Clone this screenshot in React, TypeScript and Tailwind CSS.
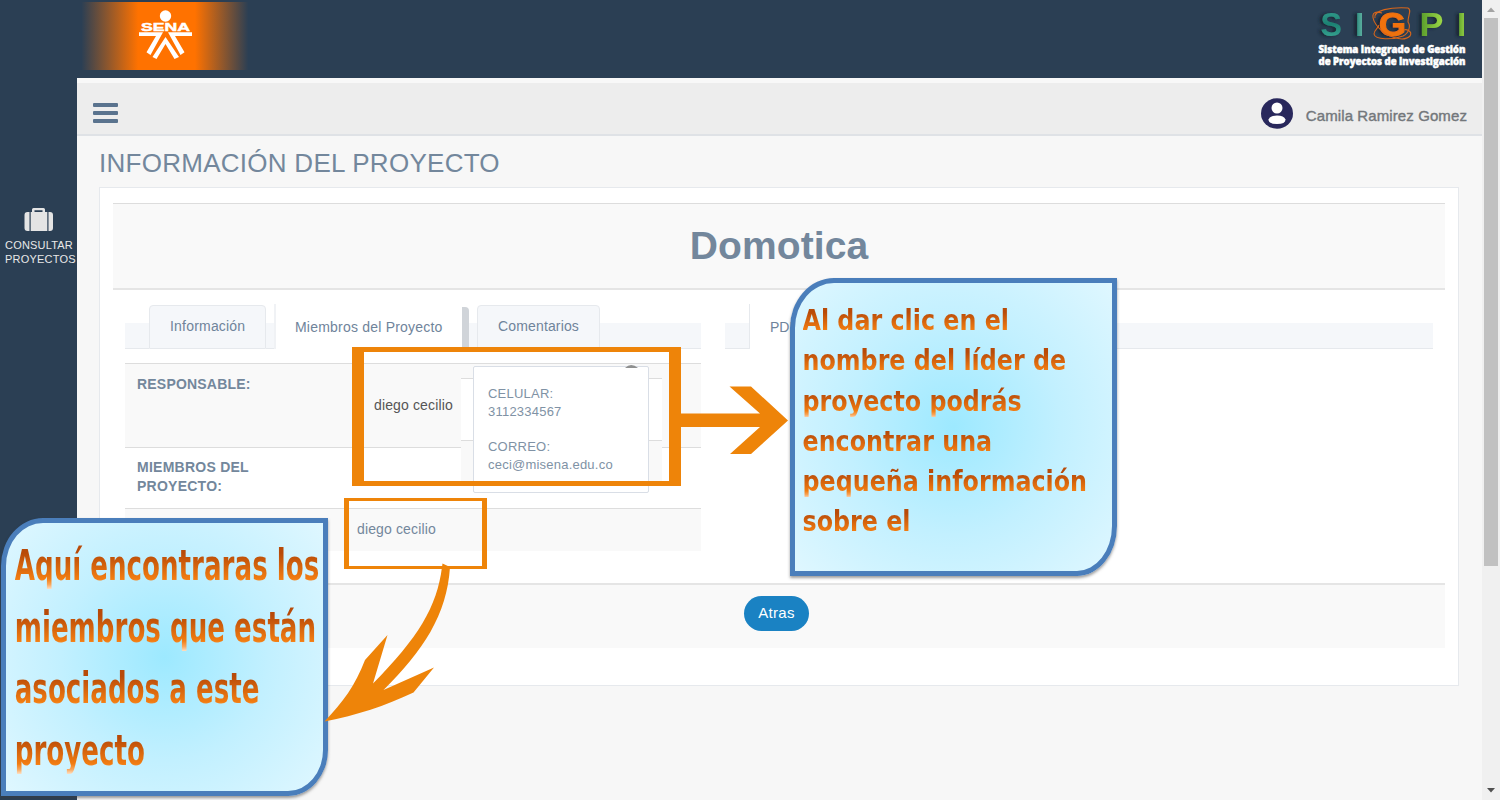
import React from "react";

function SenaLogo() {
  return (
    <svg width="56" height="52" viewBox="0 0 56 52" fill="#fff">
      <circle cx="27.5" cy="7" r="5.7" />
      <text x="3" y="21.5" fontFamily="'Liberation Sans', sans-serif" fontWeight="700" fontSize="10" textLength="49" lengthAdjust="spacingAndGlyphs" stroke="#fff" strokeWidth="0.4">
        SENA
      </text>
      <path d="M1 23.3H25L12.5 46L8.5 43.2L18 27H1Z" />
      <path d="M54 23.3H30L42.5 46L46.5 43.2L37 27H54Z" />
      <path d="M27.5 28L41 48L36.5 50L27.5 35L18.5 50L14.5 48Z" />
    </svg>
  );
}

function SigpiLogo() {
  return (
    <svg width="160" height="70" viewBox="1312 0 160 70">
      <defs>
        <linearGradient id="teal" x1="0" y1="0" x2="0" y2="1">
          <stop offset="0" stopColor="#3aa394" />
          <stop offset="0.5" stopColor="#1d8273" />
          <stop offset="1" stopColor="#3fae9c" />
        </linearGradient>
        <linearGradient id="barTeal" x1="0" y1="0" x2="1" y2="0">
          <stop offset="0" stopColor="#1f7f74" />
          <stop offset="1" stopColor="#6fc0ad" />
        </linearGradient>
        <linearGradient id="green" x1="0" y1="0" x2="1" y2="0">
          <stop offset="0" stopColor="#55992a" />
          <stop offset="1" stopColor="#a0da48" />
        </linearGradient>
        <filter id="soft" x="-30%" y="-30%" width="160%" height="160%">
          <feDropShadow dx="-3" dy="0.5" stdDeviation="1.4" floodColor="#122332" floodOpacity="0.9" />
        </filter>
      </defs>
      <g fontFamily="'Liberation Sans', sans-serif" fontWeight="700" fontSize="33" filter="url(#soft)">
        <text x="1320.500" y="35.500" textLength="21.500" lengthAdjust="spacingAndGlyphs" fill="url(#teal)">S</text>
        <text x="1355" y="35.500" fill="url(#barTeal)">I</text>
        <text x="1379" y="35.500" textLength="27" lengthAdjust="spacingAndGlyphs" fill="#f0720f" stroke="#f0720f" strokeWidth="1">G</text>
        <text x="1419.500" y="35.500" textLength="24" lengthAdjust="spacingAndGlyphs" fill="url(#green)">P</text>
        <text x="1457" y="35.500" fill="url(#green)">I</text>
      </g>
      <g fill="none" stroke="#d9661a" strokeWidth="1.1">
        <path d="M1382 13C1369 9 1372 20 1378 27C1385 36 1403 43 1410 36C1413 31 1406 29 1404 30" />
        <path d="M1375 18C1373 10 1391 7 1408 8C1412 10 1408 15 1408 22C1411 26 1409 33 1403 36C1393 40 1375 40 1374 34C1374 30 1378 29 1379 25" />
      </g>
      <g fontFamily="'Open Sans', 'Noto Sans', sans-serif" fontWeight="800" fontSize="9.600" fill="#fff" stroke="#fff" strokeWidth="0.5">
        <text x="1318.500" y="52.500" textLength="147" lengthAdjust="spacingAndGlyphs">Sistema Integrado de Gestión</text>
        <text x="1318.500" y="64.500" textLength="147" lengthAdjust="spacingAndGlyphs">de Proyectos de Investigación</text>
      </g>
    </svg>
  );
}

function Briefcase() {
  return (
    <svg width="30" height="25" viewBox="0 0 30 25" fill="#e4e4e4">
      <path fillRule="evenodd" d="M8 5V2.500Q8 1 9.500 1H19.500Q21 1 21 2.500V5H23.300V24H6.700V5ZM10.500 5H18.500V3.300H10.500Z" />
      <path d="M5.500 5V24H3.500Q.500 24 .500 21V8Q.500 5 3.500 5ZM24.500 5V24H26Q29 24 29 21V8Q29 5 26 5Z" />
    </svg>
  );
}

function Header() {
  return (
    <header className="flex h-[78px] shrink-0 items-start justify-between bg-[#2b3f54] pl-[78px] pr-[10px]">
      <div className="mt-[2px] flex h-[68px] w-[172px] justify-center bg-[linear-gradient(90deg,#2b3f54_2%,#ff7200_35%,#ff7200_68%,#2b3f54_99%)] pl-1 pt-[7px]">
        <SenaLogo />
      </div>
      <SigpiLogo />
    </header>
  );
}

function Sidebar() {
  return (
    <aside className="flex w-[77px] shrink-0 flex-col bg-[#2b3f54] pl-[5px] pt-[129px] text-[11px] leading-[14px] text-[#e8e8e8]">
      <div className="mb-[6px] ml-[19px] h-[25px]">
        <Briefcase />
      </div>
      <span className="w-max tracking-[0.2px]">CONSULTAR</span>
      <span className="w-max tracking-[0.2px]">PROYECTOS</span>
    </aside>
  );
}

function TopBar() {
  return (
    <div className="flex h-[58px] items-center justify-between border-b-2 border-t-[5px] border-b-[#dfe2e6] border-t-[#f8f8f8] bg-[#ededed] pl-4 pr-[15px]">
      <div className="mt-[9px] flex w-[25px] flex-col gap-1">
        <span className="h-1 rounded-[1px] bg-[#5a738e]" />
        <span className="h-1 rounded-[1px] bg-[#5a738e]" />
        <span className="h-1 rounded-[1px] bg-[#5a738e]" />
      </div>
      <div className="mt-[10px] flex items-center">
        <svg width="32" height="31" viewBox="0 0 32 31">
          <ellipse cx="16" cy="15.500" rx="16" ry="15.200" fill="#29285c" />
          <circle cx="16" cy="10" r="5.500" fill="#fff" />
          <path d="M7.500 21.500Q9 17.500 16 17.500T24.500 21.500Q24.500 26 16 26T7.500 21.500Z" fill="#fff" />
        </svg>
        <span className="ml-[13px] mt-1 text-[15px] leading-5 tracking-[0.1px] text-[#73777b] [-webkit-text-stroke:0.4px_#73777b]">Camila Ramirez Gomez</span>
      </div>
    </div>
  );
}

function Tabs() {
  return (
    <div className="mx-3 mt-[14px] flex h-[45px] text-[14px] text-[#6f849b]">
      <div className="flex w-[151px] items-end border-r-2 border-[#f0f2f5]">
        <span className="h-[26px] w-6 border-b border-[#e6e9ed] bg-[#f5f7fa]" />
        <span className="h-11 w-[117px] rounded-t border border-[#e6e9ed] bg-[#f5f7fa] pl-5 leading-[41px] tracking-[0.2px]">Información</span>
        <span className="h-[26px] flex-1 border-b border-[#e6e9ed] bg-[#f5f7fa]" />
      </div>
      <div className="w-[186px] pl-[19px] leading-[47px] tracking-[0.21px]">Miembros del Proyecto</div>
      <div className="mt-[3px] w-[7px] rounded-tr bg-[#d0d4d9]" />
      <div className="flex w-[232px] items-end">
        <span className="h-[26px] w-2 border-b border-[#e6e9ed] bg-[#f5f7fa]" />
        <span className="h-11 w-[123px] rounded-t border border-[#e6e9ed] bg-[#f5f7fa] pl-5 leading-[41px] tracking-[0.15px]">Comentarios</span>
        <span className="h-[26px] flex-1 border-b border-[#e6e9ed] bg-[#f5f7fa]" />
      </div>
      <div className="ml-6 flex w-[25px] items-end border-r border-[#e6e9ed]">
        <span className="h-[26px] flex-1 border-b border-[#e6e9ed] bg-[#f5f7fa]" />
      </div>
      <div className="w-[100px] pl-5 leading-[47px]">PDF</div>
      <div className="flex flex-1 items-end">
        <span className="h-[26px] flex-1 border-b border-[#e6e9ed] bg-[#f5f7fa]" />
      </div>
    </div>
  );
}

function MembersTable() {
  return (
    <div className="mx-3 mt-[14px] w-[576px] text-[14px] text-[#73879c]">
      <div className="flex h-[84px] border-t border-[#dddddd] bg-[#f9f9f9]">
        <div className="w-[225px] pl-3 pt-[11px] font-bold leading-[18px] tracking-[0.2px]">RESPONSABLE:</div>
        <div className="pl-6 pt-8 leading-[18px] tracking-[0.14px] text-[#555]">diego cecilio</div>
      </div>
      <div className="h-[61px] border-t border-[#dddddd] bg-white pl-3 pt-[10px] font-bold leading-[19px] tracking-[0.25px]">
        MIEMBROS DEL
        <br />
        PROYECTO:
      </div>
      <div className="h-[43px] border-t border-[#dddddd] bg-[#f9f9f9] pl-[232px] leading-[41px] tracking-[0.14px]">diego cecilio</div>
    </div>
  );
}

function ContactPopover() {
  return (
    <>
      <div className="absolute left-[461px] top-[365px] h-[118px] w-[201px] bg-[#f9f9f9]">
        <div className="mt-[13px] h-[63px] border-y border-[#dddddd] bg-white" />
      </div>
      <div className="absolute left-[473px] top-[366px] h-[127px] w-[176px] rounded-[2px] border border-[#d9dee6] bg-white pl-[14px] pt-[18px] text-[13px] leading-[17.7px] tracking-[0.22px] text-[#8092a5]">
        <p>CELULAR:</p>
        <p>3112334567</p>
        <p className="mt-[17.7px]">CORREO:</p>
        <p>ceci@misena.edu.co</p>
      </div>
      <svg className="absolute left-[625px] top-[364px]" width="14" height="4">
        <path d="M0 4Q6 -2 13 4Z" fill="#8f9090" />
      </svg>
    </>
  );
}

function Annotations() {
  return (
    <>
      <div className="absolute left-[352px] top-[347px] h-[139px] w-[329px] border-x-[12.5px] border-y-[5px] border-[#ee8409]" />
      <div className="absolute left-[344px] top-[498px] h-[71px] w-[143px] border-x-[5px] border-y-[3px] border-[#ee8409]" />
      <svg className="absolute left-[680px] top-[386px]" width="110" height="70" viewBox="680 386 110 70" fill="#ee8409">
        <path d="M680 413.500H760L729.500 386.500H751L788 420.500L751 454H730L760 427H680Z" />
      </svg>
    </>
  );
}

function CurvedArrow() {
  return (
    <svg className="absolute left-[320px] top-[560px]" width="120" height="170" viewBox="320 560 120 170" overflow="visible" fill="#ee8409">
      <path d="M442.500 563.500L450 567C447 615 423 651 383.500 690L434 667.500L413.500 692.500C385 706 357 715 324.500 721.500C343 702 355 686 365 660L387.500 635L373 683.500C418 638 437 607 442 567Z" />
    </svg>
  );
}

function Line({ children }: { children: React.ReactNode }) {
  return (
    <span className="block w-max bg-[linear-gradient(180deg,#b84a08_22%,#f27d12_78%,#f9a75c_90%,#fde0c4_100%)] bg-clip-text text-transparent">{children}</span>
  );
}

function LeaderCallout() {
  return (
    <div className="absolute left-[790px] top-[278px] h-[298px] w-[327px] rounded-br-[40px_50px] rounded-tl-[44px_50px] border-[5px] border-[#4a7ebb] bg-[radial-gradient(circle_at_50%_50%,#9de9ff_0%,#c2f0ff_50%,#dff7ff_100%)] shadow-[0_2px_3px_rgba(60,60,60,0.5)]">
      <div className="flex origin-top-left scale-x-[0.835] flex-col gap-[8.300px] pl-[9px] pt-[22px] font-['DejaVu_Sans'] text-[28.500px] font-bold leading-[32px]">
        <Line>Al dar clic en el</Line>
        <Line>nombre del líder de</Line>
        <Line>proyecto podrás</Line>
        <Line>encontrar una</Line>
        <Line>pequeña información</Line>
        <Line>sobre el</Line>
      </div>
    </div>
  );
}

function MembersCallout() {
  return (
    <div className="absolute left-px top-[518px] h-[278px] w-[327px] rounded-br-[40px_46px] rounded-tl-[42px_48px] border-[5px] border-[#4a7ebb] bg-[radial-gradient(circle_at_50%_50%,#9de9ff_0%,#c2f0ff_50%,#dff7ff_100%)] shadow-[0_2px_3px_rgba(60,60,60,0.5)]">
      <div className="flex origin-top-left scale-x-[0.622] flex-col gap-[15.500px] pl-[14px] pt-[20px] font-['DejaVu_Sans'] text-[42px] font-bold leading-[46px]">
        <Line>Aquí encontraras los</Line>
        <Line>miembros que están</Line>
        <Line>asociados a este</Line>
        <Line>proyecto</Line>
      </div>
    </div>
  );
}

function Scrollbar() {
  return (
    <div className="flex w-[18px] shrink-0 flex-col items-center justify-between bg-[#f0f0f0]">
      <div className="flex flex-col items-center">
        <svg width="8" height="18">
          <path d="M0 12L4 7.500L8 12Z" fill="#a3a3a3" />
        </svg>
        <div className="h-[548px] w-[14px] bg-[#c1c1c1]" />
      </div>
      <svg width="8" height="13">
        <path d="M0 1H8L4 5.500Z" fill="#505050" />
      </svg>
    </div>
  );
}

export default function App() {
  return (
    <div className="relative flex h-[800px] w-[1500px] overflow-hidden bg-[#f7f7f7] font-['Liberation_Sans',sans-serif]">
      <div className="flex w-[1482px] flex-col">
        <Header />
        <div className="flex flex-1">
          <Sidebar />
          <main className="flex flex-1 flex-col">
            <TopBar />
            <h1 className="ml-[22px] mt-[10px] h-[34px] text-[26px] leading-[34px] tracking-[0.27px] text-[#73879c]">INFORMACIÓN DEL PROYECTO</h1>
            <section className="ml-[22px] mt-[7px] h-[499px] w-[1360px] border border-[#e6e9ed] bg-white px-[13px] pt-[15px]">
              <div className="h-[87px] border-b-2 border-t border-b-[#e5e5e5] border-t-[#dddddd] bg-[#f9f9f9] text-center text-[39px] font-bold leading-[84px] tracking-[0.1px] text-[#73879c]">
                Domotica
              </div>
              <Tabs />
              <MembersTable />
              <div className="mt-8 flex h-[65px] items-start justify-center border-t-2 border-[#e5e5e5] bg-[#f9f9f9] pr-[5px] pt-[11px]">
                <button className="h-[35px] w-[65px] rounded-full bg-[#1a82c3] text-[15px] tracking-[0.3px] text-white">Atras</button>
              </div>
            </section>
          </main>
        </div>
      </div>
      <Scrollbar />
      <ContactPopover />
      <Annotations />
      <LeaderCallout />
      <MembersCallout />
      <CurvedArrow />
    </div>
  );
}
